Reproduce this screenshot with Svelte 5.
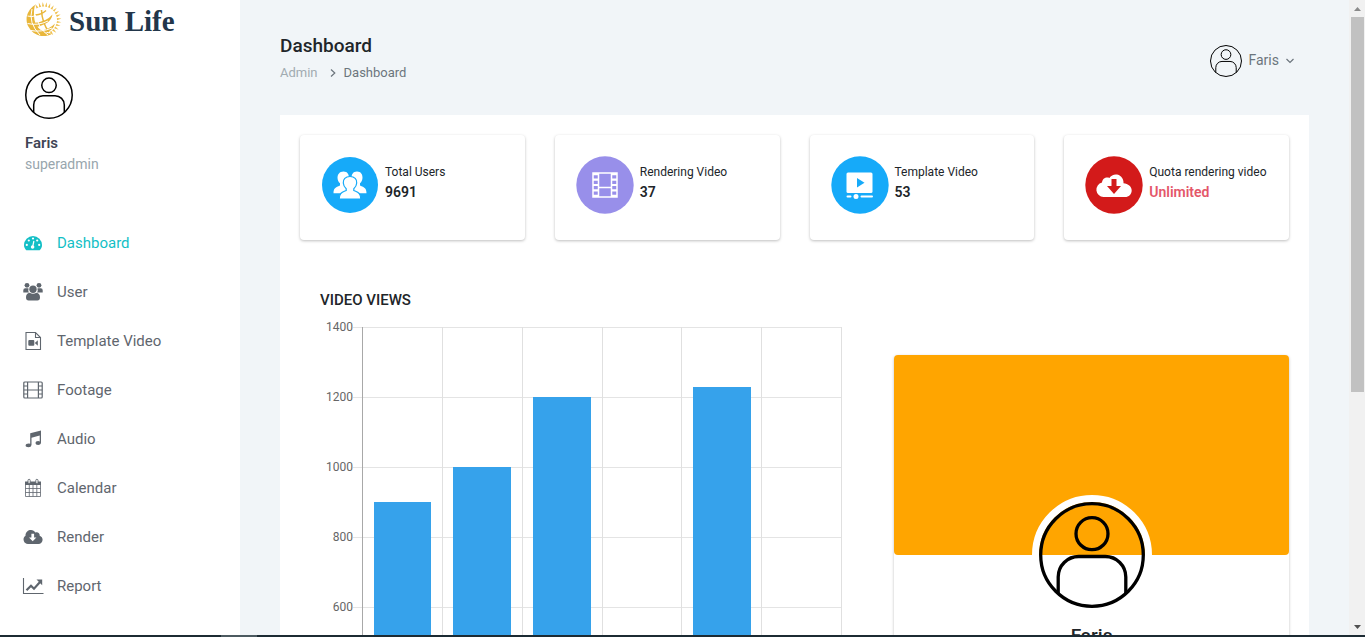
<script>
  const navItems = [
    { label: 'Dashboard', icon: 'dashboard', active: true },
    { label: 'User', icon: 'users' },
    { label: 'Template Video', icon: 'file' },
    { label: 'Footage', icon: 'film' },
    { label: 'Audio', icon: 'music' },
    { label: 'Calendar', icon: 'calendar' },
    { label: 'Render', icon: 'cloud' },
    { label: 'Report', icon: 'report' }
  ];

  const stats = [
    { label: 'Total Users', value: '9691', icon: 'people', color: '#16aaf9' },
    { label: 'Rendering Video', value: '37', icon: 'strip', color: '#988fea' },
    { label: 'Template Video', value: '53', icon: 'player', color: '#16aaf9' },
    { label: 'Quota rendering video', value: 'Unlimited', icon: 'download', color: '#d31a1a', danger: true }
  ];

  const ticks = [1400, 1200, 1000, 800, 600];
  const axisTop = 1400;
  const axisFloor = 400;
  const views = [900, 1000, 1200, 400, 1230, 400];
  const rays = Array.from({ length: 15 }, (_, i) => -117 + i * 12.5);
</script>

{#snippet avatar()}
  <svg class="avatar" viewBox="0 0 106 106" fill="none" stroke="#000" stroke-width="3.300" aria-hidden="true">
    <circle cx="53" cy="53" r="51.3" />
    <circle cx="53" cy="31.7" r="16" />
    <path d="M19.2 91.5V75A20.5 20.5 0 0 1 39.7 54.5H66.300A20.5 20.5 0 0 1 86.800 75V91.500" />
  </svg>
{/snippet}

{#snippet navIcon(name)}
  <svg class="nav-icon" viewBox="0 0 20 20" fill="currentColor" aria-hidden="true">
    {#if name === 'dashboard'}
      <path d="M3.300 17.200C1.700 15.800 1 14 1 12a9 9 0 0 1 18 0c0 2-.7 3.800-2.300 5.200z" />
      <g fill="#fff">
        <circle cx="3.800" cy="11.900" r="1.100" /><circle cx="5.800" cy="7.500" r="1.100" />
        <circle cx="10" cy="5.500" r="1.100" /><circle cx="14.200" cy="7.500" r="1.100" />
        <circle cx="16.200" cy="11.900" r="1.100" /><circle cx="9.600" cy="14" r="1.800" />
      </g>
      <path d="M9.700 13.500l1.200-5.500" stroke="#fff" stroke-width="1.200" />
    {:else if name === 'users'}
      <circle cx="4" cy="3.300" r="2.400" /><circle cx="16" cy="3.300" r="2.400" />
      <path d="M.3 10.600V8.200q0-2 2-2h2.600q.5 0 .7.300-.8 2.200.4 4.100zM19.700 10.600V8.200q0-2-2-2h-2.600q-.5 0-.7.300.8 2.200-.4 4.100z" />
      <circle cx="10" cy="7.300" r="3.700" />
      <path d="M3 15.300q0-4 3.600-4.500 3.400 1.900 6.800 0 3.600.5 3.600 4.500 0 3.200-2.600 3.200H5.600Q3 18.500 3 15.300z" />
    {:else if name === 'file'}
      <path d="M3 1.500h9.500L17.500 6.500v12H3zM12.500 1.500v5h5" fill="none" stroke="currentColor" stroke-width="1.100" />
      <rect x="5.300" y="9" width="6" height="5.800" rx="1" />
      <path d="M11.800 12l3-2.800v5.600z" />
    {:else if name === 'film'}
      <g fill="none" stroke="currentColor" stroke-width="1.200">
        <rect x=".8" y="2" width="18.400" height="16" rx="1" />
        <path d="M4.600 2v16M15.400 2v16M4.600 10h10.800M.8 6h3.800M.8 10h3.800M.8 14h3.800M15.400 6h3.800M15.400 10h3.800M15.400 14h3.800" />
      </g>
    {:else if name === 'music'}
      <path d="M7.200 4.300L18 1.600V13.400q0 2.300-2.900 2.500-2.600 0-2.600-1.700 0-2 2.800-2.100.8 0 1.400.3V6.600L8.500 8.700V15.900Q8.300 18 5.500 18.200 2.600 18.200 2.600 16.500q0-2 3.200-2.100.8 0 1.400.3z" />
    {:else if name === 'calendar'}
      <path d="M2 3.500h16v3.500H2z" />
      <path d="M2.500 6v12.500h15V6M2.500 10.500h15M2.500 14.500h15M6.300 7v11.500M10 7v11.500M13.800 7v11.500" fill="none" stroke="currentColor" stroke-width=".8" />
      <g fill="#fff" stroke="currentColor" stroke-width=".9"><rect x="5" y="1.300" width="2.200" height="4.200" rx="1.100" /><rect x="12.800" y="1.300" width="2.200" height="4.200" rx="1.100" /></g>
    {:else if name === 'cloud'}
      <path d="M5 17a4.500 4.500 0 0 1-2.500-8.200C2.500 5 5.200 3.100 8 3.100c2 0 3.500 1 4.300 2.400 2.300-1 4.700.7 4.400 3.200C18.500 9.300 19.600 11 19.600 12.800A4.200 4.200 0 0 1 15.400 17z" />
      <path d="M8.400 6.800h2.700v3.700h2.300L9.700 14.300 6 10.500h2.400z" fill="#fff" />
    {:else}
      <path d="M.5 2v15.500h20" fill="none" stroke="currentColor" stroke-width="1.100" />
      <path d="M3.500 14.300l4.500-4.600 3 3 6-6.700" fill="none" stroke="currentColor" stroke-width="2.200" />
      <path d="M13.500 3.500h5.700v5.700z" />
    {/if}
  </svg>
{/snippet}

{#snippet statIcon(name, color)}
  <svg class="stat-icon" viewBox="0 0 58 58" fill="#fff" aria-hidden="true">
    <circle cx="29" cy="29" r={name === 'people' ? 28 : 28.7} fill={color} />
    {#if name === 'people'}
      <path d="M22.500 15.500c4 0 5.500 3 5.300 6-.1 2.500-1 4.500-2.300 5.700v2l4 2v6H12.500c0-5 2-6 6.500-7.800v-2.200c-1.600-1.200-2.500-3.200-2.500-5.700 0-3 2-6 6-6z" />
      <path d="M36 15.500c-4 0-5.500 3-5.300 6 .1 2.500 1 4.500 2.300 5.700v2l-4 2v6h16.500c0-5-2-6-6.500-7.800v-2.200c1.600-1.200 2.500-3.200 2.500-5.700 0-3-1.500-6-5.500-6z" />
      <path d="M29 20.500c4.700 0 7 3 6.700 6.500-.2 2.700-1.400 4.500-2.900 5.800v1.700c4 1.800 7 2.300 7 8.500H18.200c0-6.200 3-6.700 7-8.500v-1.700c-1.500-1.300-2.700-3.100-2.900-5.800-.3-3.500 2-6.500 6.700-6.500z" stroke={color} stroke-width="1.200" />
    {:else if name === 'strip'}
      <g fill="none" stroke="#fff" stroke-width="1.500">
        <rect x="17" y="17" width="24" height="24" />
        <path d="M22.500 17v24M35.500 17v24M22.500 31.500h13" />
        <path d="M19.500 17v24M38.500 17v24" stroke-width="5" stroke-dasharray="2.200 3.250" />
      </g>
    {:else if name === 'player'}
      <rect x="15.500" y="16.500" width="26" height="20.500" rx="1.500" />
      <path d="M26 22v9.500l7.500-4.700z" fill={color} />
      <path d="M16.500 40.500h3M30.500 40.500h10.500" stroke="#fff" stroke-width="2" stroke-linecap="round" />
      <circle cx="25" cy="40.500" r="2.500" />
    {:else}
      <path d="M18.500 41a7.300 7.300 0 0 1-1.500-14.400c.3-4 4.200-6 7.400-4.600 3.200-5.500 12-4.600 13.700 2 .4 1.300.5 2.300.4 3.300C43 28 46.700 30.500 46.700 34.500c0 3.800-3 6.500-6.500 6.500z" />
      <path d="M26.500 23h5v7H36l-7 8-7-8h4.500z" fill={color} />
    {/if}
  </svg>
{/snippet}

<div class="app">
  <aside class="sidebar">
    <a class="brand" href="#home" aria-label="Sun Life">
      <svg class="sun" viewBox="0 0 38 38" fill="none" aria-hidden="true">
        <path d="M10 4C2 9-1 19 4 26.500 9 35 19 37.500 27.500 32.500 19 33 11 27 9.500 19 8.500 13 9 8 10 4z" fill="#e9b73b" />
        <path d="M9 22Q21 21 27.500 13.500 26 23 11 26zM14 29.500Q24 29 30 22.500 28 31 17 32.500z" fill="#e9b73b" />
        <path d="M10.500 14Q17 13.500 21 9.500M16.500 9Q17 22 24 31" stroke="#e9b73b" stroke-width="1.500" />
        <path d="M2.500 15Q7 16.500 11 14.500M2.500 22.500Q13 25 23 20M6 29.500Q16 31.500 27 27M7 8Q3 22 15 34M12 17Q14 28 23 34" stroke="#fff" stroke-width="1" />
        {#each rays as angle}
          <path d="M32 18l4.500.8L32 20.200z" fill="#efc14f" transform="rotate({angle} 18.500 19)" />
        {/each}
      </svg>
      <span>Sun Life</span>
    </a>
    <div class="account">
      {@render avatar()}
      <strong>Faris</strong>
      <span>superadmin</span>
    </div>
    <nav aria-label="Main">
      {#each navItems as item}
        <a href="#{item.icon}" class:active={item.active}>{@render navIcon(item.icon)}{item.label}</a>
      {/each}
    </nav>
  </aside>

  <main>
    <header>
      <div>
        <h1>Dashboard</h1>
        <div class="crumbs">
          <a href="#admin">Admin</a>
          <svg width="6" height="8" viewBox="0 0 6 8" fill="none" stroke="currentColor" stroke-width="1.200" aria-hidden="true"><path d="M1 .5L4.800 4 1 7.500" /></svg>
          <span>Dashboard</span>
        </div>
      </div>
      <button class="profile-menu" type="button">
        {@render avatar()}
        <span>Faris</span>
        <svg width="8" height="6" viewBox="0 0 8 6" fill="none" stroke="currentColor" stroke-width="1.200" aria-hidden="true"><path d="M.5 1L4 4.500 7.500 1" /></svg>
      </button>
    </header>

    <div class="panel">
      <div class="stats">
        {#each stats as stat}
          <div class="card stat">
            {@render statIcon(stat.icon, stat.color)}
            <div>
              <div class="stat-label">{stat.label}</div>
              <div class="stat-value" class:danger={stat.danger}>{stat.value}</div>
            </div>
          </div>
        {/each}
      </div>

      <div class="details">
        <section class="chart-section">
          <h2>VIDEO VIEWS</h2>
          <div class="chart">
            <div class="ticks">
              {#each ticks as tick}
                <div class="tick"><span>{tick}</span><i></i></div>
              {/each}
            </div>
            <div class="plot">
              {#each views as count}
                <div class="slot"><div class="bar" style="height: {((count - axisFloor) / (axisTop - axisFloor)) * 100}%"></div></div>
              {/each}
            </div>
          </div>
        </section>
        <section class="card profile">
          <div class="banner"></div>
          <div class="portrait">{@render avatar()}</div>
          <h3>Faris</h3>
        </section>
      </div>
    </div>
  </main>

  <div class="scrollbar" aria-hidden="true">
    <svg viewBox="0 0 16 17"><path d="M5 11l3.500-4 3.500 4z" fill="#8a8a8a" /></svg>
    <div class="thumb"></div>
    <svg viewBox="0 0 16 17"><path d="M5 7l3.500 4L12 7z" fill="#505050" /></svg>
  </div>
  <div class="taskbar" aria-hidden="true"><span></span></div>
</div>

<style>
  :global(body) {
    margin: 0;
    overflow: hidden;
  }
  .app {
    display: grid;
    grid-template-columns: 240px minmax(0, 1fr) 16px;
    grid-template-rows: minmax(0, 1fr) 2px;
    height: 100vh;
    background: #f1f5f8;
    color: #212529;
    font-family: Roboto, sans-serif;
    font-size: 14px;
  }
  .app * {
    box-sizing: border-box;
  }
  a {
    color: inherit;
    text-decoration: none;
  }
  .avatar {
    display: block;
    width: 48px;
    height: 48px;
  }

  .sidebar {
    overflow: hidden;
    background: #fff;
  }
  .brand {
    display: flex;
    align-items: center;
    gap: 6px;
    height: 40px;
    padding-left: 25px;
    color: #22364a;
    font: bold 29px/40px 'Liberation Serif', serif;
  }
  .brand span {
    padding-top: 2px;
  }
  .sun {
    width: 38px;
    height: 38px;
  }
  .account {
    display: flex;
    flex-direction: column;
    align-items: flex-start;
    padding: 31px 25px 0;
  }
  .account strong {
    margin-top: 13px;
    color: #3f4555;
    font-size: 15px;
    font-weight: 600;
    line-height: 22px;
  }
  .account span {
    color: #98a6ad;
    line-height: 20px;
  }
  nav {
    padding-top: 44px;
  }
  nav a {
    display: flex;
    align-items: center;
    gap: 14px;
    height: 49px;
    padding-left: 23px;
    color: #5f666e;
    font-size: 15px;
  }
  nav a.active {
    color: #13bfc6;
  }
  .nav-icon {
    width: 20px;
    height: 20px;
    overflow: visible;
  }

  main {
    overflow: hidden;
    padding: 0 40px;
  }
  header {
    display: flex;
    align-items: flex-start;
    justify-content: space-between;
    height: 115px;
    padding-top: 34px;
  }
  h1 {
    margin: 0;
    font-size: 19px;
    font-weight: 500;
    line-height: 24px;
  }
  .crumbs {
    display: flex;
    align-items: center;
    gap: 8px;
    margin-top: 5px;
    color: #6c757d;
    font-size: 13px;
    line-height: 20px;
  }
  .crumbs a {
    padding-right: 4px;
    color: #a1abb1;
  }
  .profile-menu {
    display: flex;
    align-items: center;
    gap: 7px;
    height: 32px;
    margin-top: 11px;
    margin-right: 15px;
    padding: 0;
    border: 0;
    background: none;
    color: #6c757d;
    font: 14px/20px Roboto, sans-serif;
  }
  .profile-menu span {
    padding-bottom: 2px;
  }
  .profile-menu .avatar {
    width: 32px;
    height: 32px;
  }

  .panel {
    padding: 20px;
    background: #fff;
  }
  .card {
    border-radius: 4px;
    background: #fff;
    box-shadow: 0 1px 3px rgba(0, 0, 0, 0.26);
  }
  .stats {
    display: grid;
    grid-template-columns: repeat(4, minmax(0, 1fr));
    gap: 30px;
  }
  .stat {
    display: flex;
    gap: 6px;
    height: 105px;
    padding: 21px 10px 0 21px;
  }
  .stat-icon {
    flex: none;
    width: 58px;
    height: 58px;
  }
  .stat-label {
    margin-top: 6px;
    font-size: 12px;
    line-height: 20px;
    white-space: nowrap;
  }
  .stat-value {
    font-weight: 600;
    line-height: 20px;
  }
  .danger {
    color: #e4576a;
  }

  .details {
    display: grid;
    grid-template-columns: minmax(0, 10fr) minmax(0, 7fr);
    align-items: start;
    gap: 30px;
    padding-top: 50px;
  }
  .chart-section {
    padding: 0 22px 0 20px;
  }
  h2 {
    margin: 0;
    font-size: 15px;
    font-weight: 500;
    line-height: 20px;
  }
  .chart {
    display: grid;
    padding-top: 17px;
  }
  .ticks,
  .plot {
    grid-area: 1 / 1;
  }
  .tick {
    display: flex;
    height: 70px;
    color: #666;
    font-size: 12px;
  }
  .tick span {
    width: 33px;
    margin-top: -10px;
    line-height: 20px;
    text-align: right;
  }
  .tick i {
    flex: 1;
    border-top: 1px solid #e4e4e4;
  }
  .plot {
    display: grid;
    grid-template-columns: repeat(6, minmax(0, 1fr));
    margin-left: 42px;
    border-left: 1px solid #a8a8a8;
  }
  .slot {
    display: flex;
    align-items: flex-end;
    justify-content: center;
    border-right: 1px solid #e0e0e0;
  }
  .bar {
    width: 73%;
    background: #36a2eb;
  }

  .profile {
    height: 400px;
    margin-top: 65px;
  }
  .banner {
    height: 200px;
    border-radius: 4px;
    background: orange;
  }
  .portrait {
    width: 120px;
    margin: -60px auto 0;
    border: 7px solid #fff;
    border-radius: 50%;
  }
  .portrait .avatar {
    width: 106px;
    height: 106px;
  }
  h3 {
    margin: 9px 0 0;
    font-size: 19px;
    font-weight: 500;
    line-height: 24px;
    text-align: center;
  }

  .scrollbar {
    display: flex;
    flex-direction: column;
    background: #f1f1f1;
  }
  .scrollbar svg {
    width: 16px;
    height: 17px;
  }
  .scrollbar svg:last-child {
    margin-top: auto;
  }
  .thumb {
    height: 60%;
    max-height: 375px;
    margin: 0 1px 0 2px;
    background: #c1c1c1;
  }
  .taskbar {
    grid-column: 1 / -1;
    background: #1c2b33;
  }
  .taskbar span {
    display: block;
    width: 36px;
    height: 2px;
    margin-left: 221px;
    background: #4c5a60;
  }
</style>
